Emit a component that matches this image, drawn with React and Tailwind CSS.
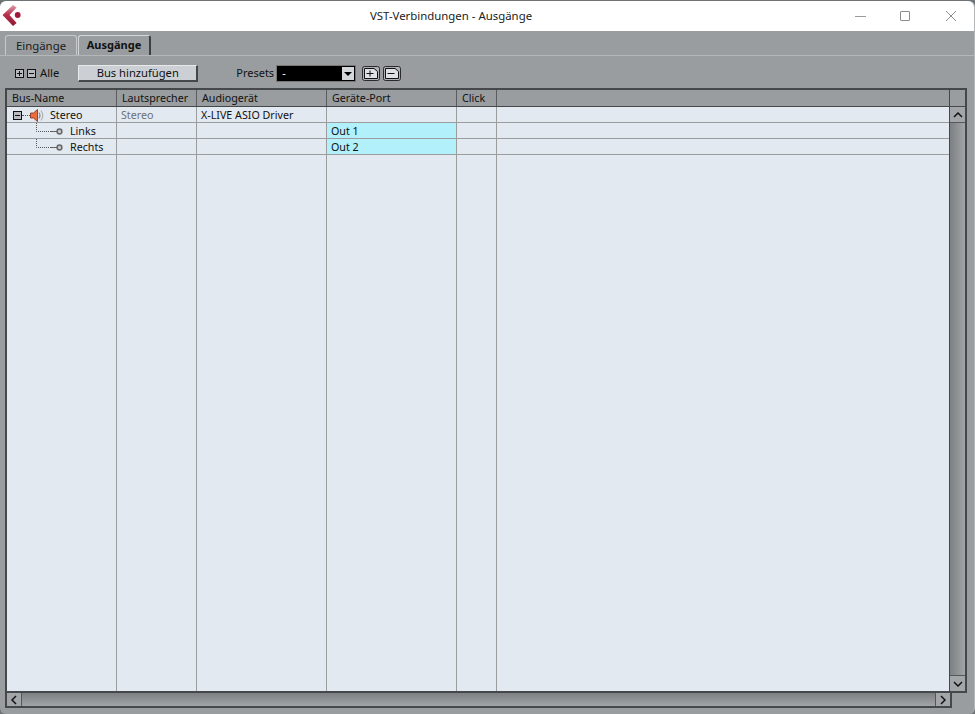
import React from 'react';

const font = { fontFamily: '"Noto Sans", "Open Sans", sans-serif' };

const columns = [
  { name: 'Bus-Name', cls: 'w-[110px]' },
  { name: 'Lautsprecher', cls: 'w-[80px]' },
  { name: 'Audiogerät', cls: 'w-[130px]' },
  { name: 'Geräte-Port', cls: 'w-[130px]' },
  { name: 'Click', cls: 'w-[40px]' },
  { name: '', cls: 'flex-1' },
];

const Logo = () => (
  <svg width="22" height="28" viewBox="0 0 22 28" className="block">
    <defs>
      <linearGradient id="logoFill" x1="0" y1="0" x2="0" y2="1">
        <stop offset="0" stopColor="#e0a0ac" />
        <stop offset="0.45" stopColor="#b8304e" />
        <stop offset="1" stopColor="#8f1832" />
      </linearGradient>
    </defs>
    <path d="M13 3 L16.6 5.5 L9.5 13 L16.6 21 L13 24 L2.5 13 Z" fill="url(#logoFill)" />
    <circle cx="17.7" cy="13" r="2.9" fill="#a5163a" />
  </svg>
);

const WindowButtons = () => (
  <div className="flex items-center mr-[15px]">
    <svg width="15" height="15" viewBox="0 0 15 15">
      <path d="M2 7.5H13" stroke="#9a9a9a" strokeWidth="1" />
    </svg>
    <svg width="15" height="15" viewBox="0 0 15 15" className="ml-[30px]">
      <rect x="2.5" y="2.5" width="9" height="9" rx="0.5" fill="none" stroke="#8d8d8d" />
    </svg>
    <svg width="15" height="15" viewBox="0 0 15 15" className="ml-[31px]">
      <path d="M2 2L12 12M12 2L2 12" stroke="#8d8d8d" strokeWidth="1" />
    </svg>
  </div>
);

const PlusMinus = ({ plus }) => (
  <svg width="9" height="9" viewBox="0 0 9 9" className="block">
    <rect x="0.5" y="0.5" width="8" height="8" fill="#b9bcbe" stroke="#111" />
    <path d="M2 4.5H7" stroke="#111" />
    {plus && <path d="M4.5 2V7" stroke="#111" />}
  </svg>
);

const PresetIcon = ({ plus }) => (
  <svg width="18" height="15" viewBox="0 0 18 15" className="block">
    <rect x="0.5" y="0.5" width="17" height="14" rx="2" fill="#aeb2b5" stroke="#2a2a2a" />
    <path d="M2.5 2.5H12L15.5 5.5V12.5H2.5Z" fill="#dfe2e5" stroke="#111" />
    <path d="M4.5 7.5H11.5" stroke="#111" />
    {plus && <path d="M8 4.5V10.5" stroke="#111" />}
  </svg>
);

const Speaker = () => (
  <svg width="15" height="13" viewBox="0 0 15 13" className="block">
    <path d="M0.5 4H3.5L7.5 0.5V12.5L3.5 9H0.5Z" fill="#ee6d3c" stroke="#7b2c14" strokeWidth="0.8" />
    <path d="M9 3.5Q11 6.5 9 9.5" fill="none" stroke="#8f9498" strokeWidth="1.2" />
    <path d="M11 1.5Q14.5 6.5 11 11.5" fill="none" stroke="#aeb2b6" strokeWidth="1.2" />
  </svg>
);

const TreeBranch = () => (
  <svg width="31" height="16" viewBox="0 0 31 16" className="block">
    <path d="M0.5 0V8.5H15" fill="none" stroke="#555" strokeDasharray="1 1" />
    <path d="M15 8.5H21" stroke="#666" />
    <circle cx="23.5" cy="8.5" r="2.4" fill="#c7cbd0" stroke="#666" strokeWidth="1.5" />
  </svg>
);

const Cell = ({ cls, text, children, cyan, grey }) => (
  <div
    className={`${cls} shrink-0 h-full border-r border-[#9a9c9e] flex items-center pl-[4px] pt-px overflow-hidden ${
      cyan ? 'bg-[#b2f0fc]' : ''
    } ${grey ? 'text-[#6e7072]' : 'text-[#111]'}`}
  >
    {children || text}
  </div>
);

const Row = ({ first, port, speaker, device }) => (
  <div className="h-[16px] flex border-b border-[#9a9c9e] box-border">
    <Cell cls={columns[0].cls}>{first}</Cell>
    <Cell cls={columns[1].cls} text={speaker} grey />
    <Cell cls={columns[2].cls} text={device} />
    <Cell cls={columns[3].cls} text={port} cyan={!!port} />
    <Cell cls={columns[4].cls} />
    <div className="flex-1" />
  </div>
);

export default function App() {
  return (
    <div className="w-[975px] h-[714px] bg-[#6f7376] pt-px overflow-hidden text-[10.7px]" style={font}>
      <div className="h-[713px] bg-[#999d9f] rounded-t-[6px] rounded-b-[6px] flex flex-col border-r border-[#b4b7b9]">
        {/* title bar */}
        <div className="h-[30px] shrink-0 bg-white rounded-t-[6px] flex items-center justify-between">
          <Logo />
          <span className="text-[11.4px] text-[#222] ml-[27px]">VST-Verbindungen - Ausgänge</span>
          <WindowButtons />
        </div>

        {/* tabs */}
        <div className="h-[25px] shrink-0 flex items-end pl-[5px] gap-px border-b border-[#b3b7b9] box-border">
          <div className="w-[72px] h-[20px] rounded-t-[3px] border border-b-0 border-[#c6c9cb] flex items-center justify-center text-[11.4px] text-[#1a1a1a]">
            Eingänge
          </div>
          <div className="w-[73px] h-[20px] rounded-t-[3px] border-t border-l border-[#d3d6d8] border-r-2 border-r-[#3c3f41] flex items-center justify-center text-[11px] font-bold text-[#111]">
            Ausgänge
          </div>
        </div>

        {/* toolbar */}
        <div className="h-[32px] shrink-0 flex items-center pl-[15px] pt-[3px] text-[11.2px] text-[#111]">
          <div className="flex gap-[3px]">
            <PlusMinus plus />
            <PlusMinus />
          </div>
          <span className="ml-[4px]">Alle</span>
          <div className="ml-[19px] w-[120px] h-[17px] bg-[#ccd0d4] border-t border-l border-[#e7e9eb] border-r-2 border-b-2 border-r-[#45484a] border-b-[#45484a] flex items-center justify-center">
            Bus hinzufügen
          </div>
          <span className="ml-[38px] text-[11px]">Presets</span>
          <div className="ml-[2px] w-[80px] h-[17px] bg-black border border-[#777] flex items-center justify-between text-white pl-[5px] text-[11px]">
            -
            <div className="w-[12px] h-[13px] bg-[#d5d8da] mr-px flex items-center justify-center">
              <div className="w-0 h-0 border-l-[4px] border-r-[4px] border-t-[4px] border-l-transparent border-r-transparent border-t-black" />
            </div>
          </div>
          <div className="ml-[6px] flex gap-[3px]">
            <PresetIcon plus />
            <PresetIcon />
          </div>
        </div>

        {/* table */}
        <div className="ml-[5px] mr-[7px] flex flex-col">
          <div className="h-[605px] border-2 border-[#45484a] box-border flex">
            <div className="flex-1 flex flex-col min-w-0">
              <div className="h-[17px] shrink-0 flex bg-[#999d9f] border-b border-[#45484a] box-border">
                {columns.map((c) => (
                  <div
                    key={c.name || 'rest'}
                    className={`${c.cls} ${c.name === '' ? '' : 'shrink-0 border-r border-[#5a5d5f]'} flex items-center pl-[5px] text-[#111]`}
                  >
                    {c.name}
                  </div>
                ))}
              </div>
              <div className="flex-1 bg-[#e3e9f1] flex flex-col">
                <Row
                  first={
                    <div className="flex items-center">
                      <div className="ml-[2px]">
                        <PlusMinus />
                      </div>
                      <div className="w-[8px] border-t border-dotted border-[#555]" />
                      <Speaker />
                      <span className="ml-[5px]">Stereo</span>
                    </div>
                  }
                  speaker="Stereo"
                  device="X-LIVE ASIO Driver"
                />
                <Row
                  port="Out 1"
                  first={
                    <div className="flex items-center ml-[25px] -mt-px">
                      <TreeBranch />
                      <span className="ml-[3px] mt-px">Links</span>
                    </div>
                  }
                />
                <Row
                  port="Out 2"
                  first={
                    <div className="flex items-center ml-[25px] -mt-px">
                      <TreeBranch />
                      <span className="ml-[3px] mt-px">Rechts</span>
                    </div>
                  }
                />
                <div className="flex-1 flex">
                  {columns.slice(0, 5).map((c) => (
                    <div key={c.name} className={`${c.cls} shrink-0 border-r border-[#9a9c9e]`} />
                  ))}
                </div>
              </div>
            </div>

            {/* vertical scrollbar */}
            <div className="w-[16px] shrink-0 flex flex-col border-l border-[#45484a] bg-gradient-to-r from-[#7d8082] to-[#a2a5a7]">
              <div className="h-[17px] shrink-0 bg-[#999d9f] border-b border-[#45484a]" />
              <div className="h-[16px] shrink-0 bg-[#a3a6a8] border-b border-[#55585a] flex items-center justify-center">
                <svg width="10" height="6" viewBox="0 0 10 6">
                  <path d="M1 5L5 1L9 5" fill="none" stroke="#111" strokeWidth="1.5" />
                </svg>
              </div>
              <div className="flex-1" />
              <div className="h-[16px] shrink-0 bg-[#a3a6a8] border-t border-[#55585a] flex items-center justify-center">
                <svg width="10" height="6" viewBox="0 0 10 6">
                  <path d="M1 1L5 5L9 1" fill="none" stroke="#111" strokeWidth="1.5" />
                </svg>
              </div>
            </div>
          </div>

          {/* horizontal scrollbar, stops short of the corner */}
          <div className="h-[15px] shrink-0 mr-[15px] flex border-2 border-t-0 border-[#45484a] bg-gradient-to-b from-[#7d8082] to-[#a2a5a7] box-border">
            <div className="w-[15px] bg-[#a3a6a8] border-r border-[#55585a] flex items-center justify-center">
              <svg width="6" height="10" viewBox="0 0 6 10">
                <path d="M5 1L1 5L5 9" fill="none" stroke="#111" strokeWidth="1.5" />
              </svg>
            </div>
            <div className="flex-1" />
            <div className="w-[15px] bg-[#a3a6a8] border-l border-[#55585a] flex items-center justify-center">
              <svg width="6" height="10" viewBox="0 0 6 10">
                <path d="M1 1L5 5L1 9" fill="none" stroke="#111" strokeWidth="1.5" />
              </svg>
            </div>
          </div>
        </div>
      </div>
    </div>
  );
}
